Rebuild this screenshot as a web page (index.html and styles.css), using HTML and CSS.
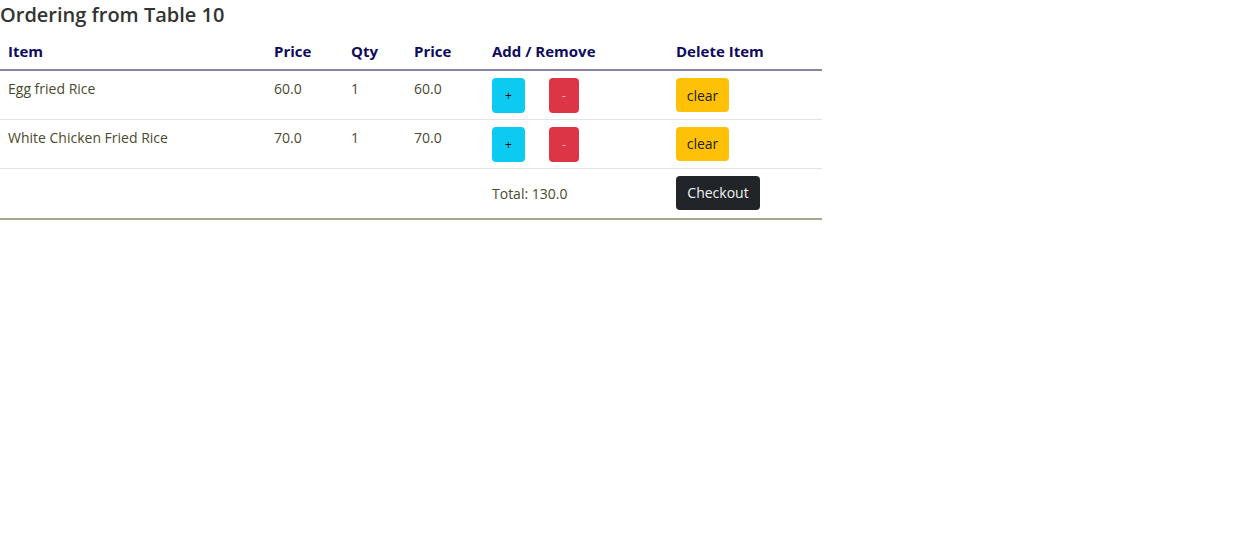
FILE: index.html
```html
<!DOCTYPE html>
<html>
<head>
<meta charset="utf-8">
<link rel="stylesheet" href="styles.css">
</head>
<body>
<h5 class="title">Ordering from Table 10</h5>
<table class="order">
  <colgroup>
    <col class="c1"><col class="c2"><col class="c3"><col class="c4"><col class="c5"><col class="c6">
  </colgroup>
  <thead>
    <tr><th>Item</th><th>Price</th><th>Qty</th><th>Price</th><th>Add / Remove</th><th>Delete Item</th></tr>
  </thead>
  <tbody>
    <tr>
      <td class="txt">Egg fried Rice</td><td class="txt">60.0</td><td class="txt">1</td><td class="txt">60.0</td>
      <td class="btns"><button class="btn add">+</button><button class="btn rem">-</button></td>
      <td class="btns"><button class="btn clear">clear</button></td>
    </tr>
    <tr>
      <td class="txt">White Chicken Fried Rice</td><td class="txt">70.0</td><td class="txt">1</td><td class="txt">70.0</td>
      <td class="btns"><button class="btn add">+</button><button class="btn rem">-</button></td>
      <td class="btns"><button class="btn clear">clear</button></td>
    </tr>
    <tr class="last">
      <td></td><td></td><td></td><td></td>
      <td class="total">Total: 130.0</td>
      <td class="btns"><button class="btn checkout">Checkout</button></td>
    </tr>
  </tbody>
</table>
</body>
</html>
```

FILE: styles.css
```css
html, body {
  margin: 0;
  padding: 0;
  background: #fff;
}
body {
  font-family: "Open Sans", "Noto Sans", sans-serif;
  color: #4a4a2e;
}
.title {
  margin: 0;
  height: 32px;
  font-size: 20px;
  font-weight: 600;
  line-height: 30px;
  color: #333333;
}
.order {
  width: 822px;
  border-collapse: collapse;
  table-layout: fixed;
  font-size: 14px;
  border-bottom: 2px solid #a7a78e;
}
.c1 { width: 266px; }
.c2 { width: 77px; }
.c3 { width: 63px; }
.c4 { width: 78px; }
.c5 { width: 184px; }
.c6 { width: 154px; }
.order th {
  text-align: left;
  font-size: 15px;
  font-weight: 700;
  color: #0e0b5c;
  padding: 7px 8px 6px;
  height: 24px;
  border-bottom: 2px solid #8884a6;
}
.order td {
  box-sizing: border-box;
  padding: 0 8px;
  height: 49px;
  vertical-align: top;
  border-bottom: 1px solid #e3e3e3;
}
.order td.txt {
  padding-top: 8px;
  line-height: 20px;
}
.order td.btns {
  padding-top: 7px;
}
.order tr.last td {
  height: 51px;
  border-bottom: none;
}
.order td.total {
  padding-top: 15px;
  line-height: 20px;
}
.btn {
  font-family: inherit;
  border: none;
  border-radius: 4px;
  padding: 0;
  cursor: pointer;
  vertical-align: top;
}
.add {
  width: 33px;
  height: 35px;
  background: #0dcaf0;
  color: #111;
  font-size: 12px;
  margin-right: 24px;
}
.rem {
  width: 30px;
  height: 35px;
  background: #dc3545;
  color: #f3c0c5;
  font-size: 12px;
}
.clear {
  width: 53px;
  height: 34px;
  background: #ffc107;
  color: #222;
  font-size: 14px;
}
.last .btns { padding-top: 7px; }
.checkout {
  width: 84px;
  height: 34px;
  background: #212529;
  color: #f4f4f4;
  font-size: 14px;
}
```
